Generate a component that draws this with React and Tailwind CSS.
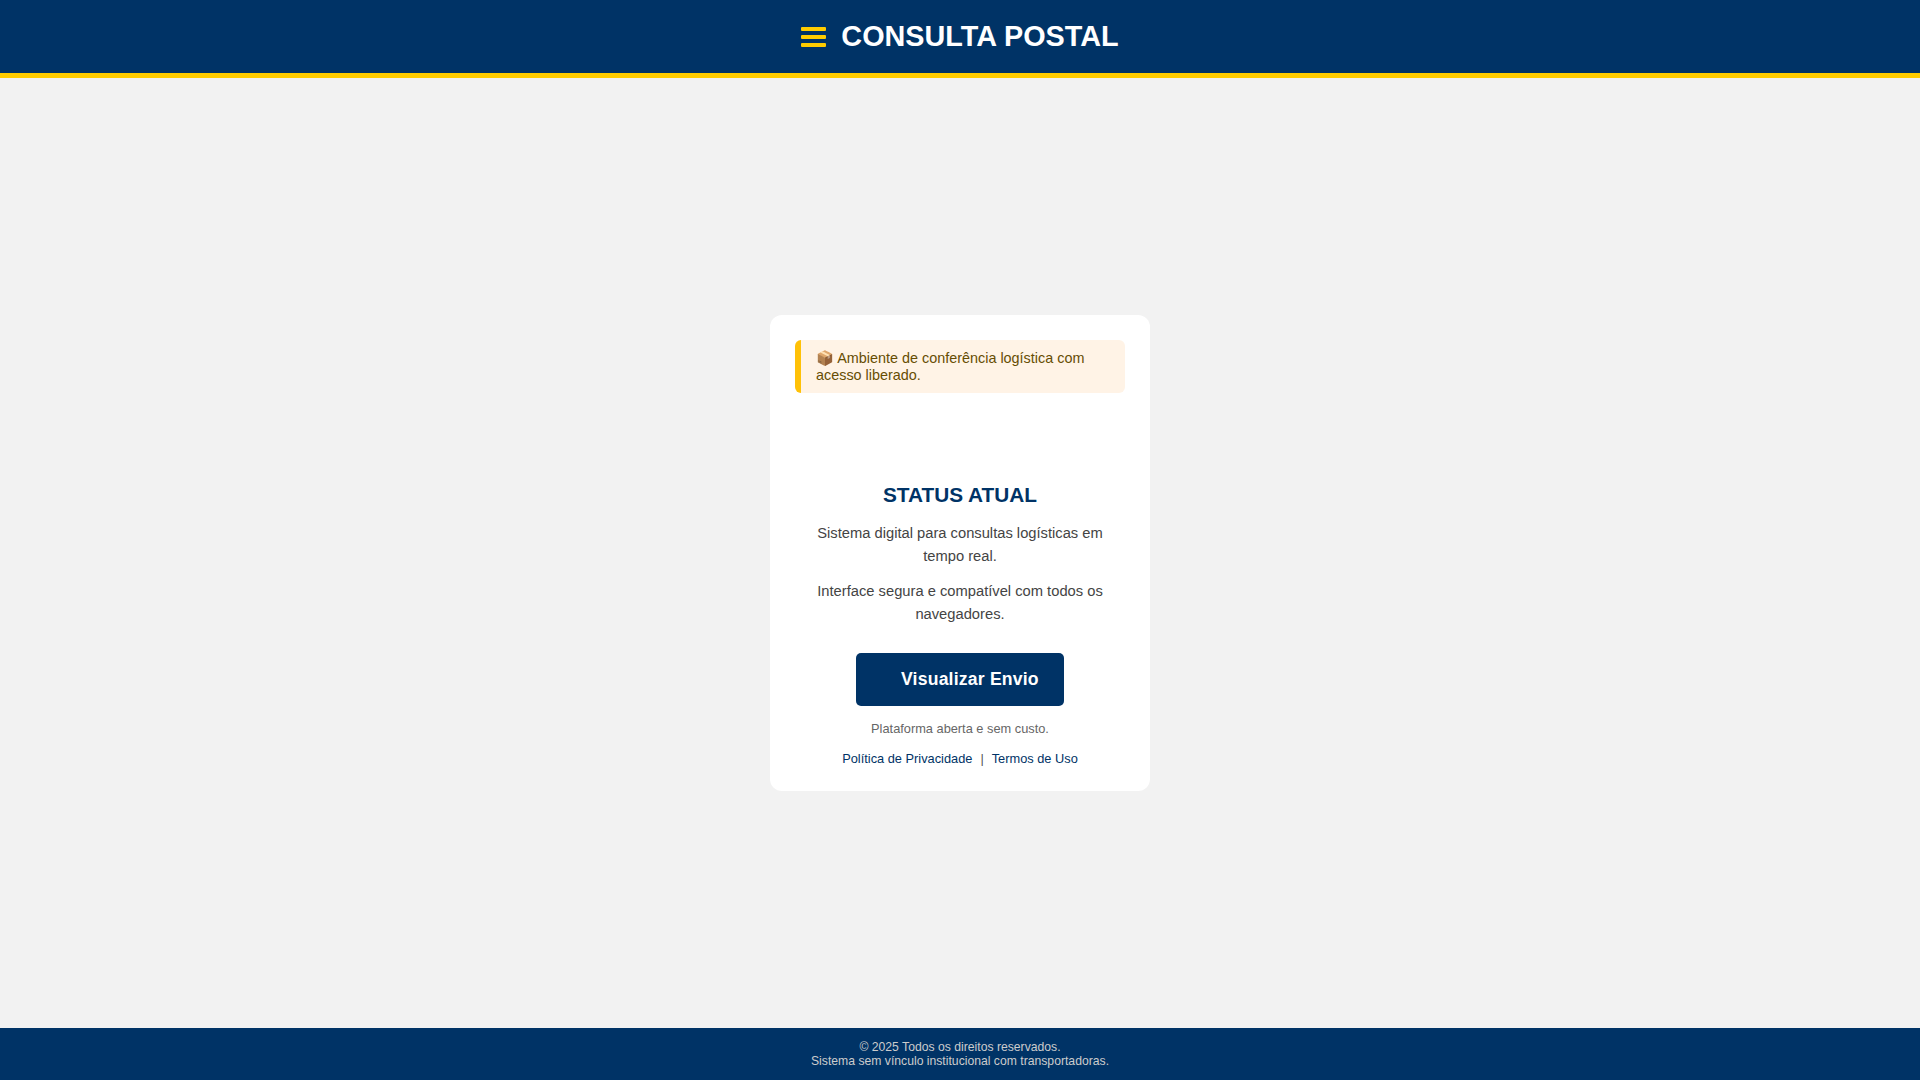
export default function App() {
  return (
    <div className="min-h-screen flex flex-col bg-[#f2f2f2] font-['Liberation_Sans',Arial,sans-serif]">
      <header className="h-[78px] bg-[#003366] border-b-[5px] border-[#ffcc00] flex items-center justify-center">
        <div className="flex items-center gap-[15px]">
          <div className="w-[25px] flex flex-col gap-1">
            <span className="block h-1 rounded-[1px] bg-[#ffcc00]"></span>
            <span className="block h-1 rounded-[1px] bg-[#ffcc00]"></span>
            <span className="block h-1 rounded-[1px] bg-[#ffcc00]"></span>
          </div>
          <h1 className="text-[28.8px] leading-[33px] font-bold text-white">CONSULTA POSTAL</h1>
        </div>
      </header>

      <main className="flex-1 flex items-center justify-center">
        <div className="w-[380px] bg-white rounded-xl p-[25px] text-center">
          <div className="bg-[#fff3e6] border-l-[6px] border-[#ffc107] rounded-md px-[15px] pt-[10px] pb-[9px] text-left text-[14.4px] leading-[17px] text-[#664d03]">
            📦 Ambiente de conferência logística com acesso liberado.
          </div>

          <h2 className="mt-[89px] text-[20.8px] leading-[25px] font-bold text-[#003366]">STATUS ATUAL</h2>
          <p className="mt-[15px] text-[14.72px] leading-[23px] text-[#444444]">Sistema digital para consultas logísticas em tempo real.</p>
          <p className="mt-[12px] text-[14.72px] leading-[23px] text-[#444444]">Interface segura e compatível com todos os navegadores.</p>

          <button className="mt-[27px] w-[208px] h-[53px] bg-[#003366] rounded-[5px] pl-[45px] text-left text-[17.6px] font-bold tracking-[0.2px] text-white">
            Visualizar Envio
          </button>

          <p className="mt-[15px] text-[12.8px] leading-[15px] text-[#666666]">Plataforma aberta e sem custo.</p>
          <div className="mt-[15px] text-[12.8px] leading-[15px] text-[#555555] flex justify-center gap-2">
            <a href="#" className="text-[#003366]">Política de Privacidade</a>
            <span>|</span>
            <a href="#" className="text-[#003366]">Termos de Uso</a>
          </div>
        </div>
      </main>

      <footer className="h-[52px] bg-[#003366] pt-[12px] text-center text-[12.2px] leading-[14px] text-[#cccccc]">
        <p>© 2025 Todos os direitos reservados.</p>
        <p>Sistema sem vínculo institucional com transportadoras.</p>
      </footer>
    </div>
  );
}
